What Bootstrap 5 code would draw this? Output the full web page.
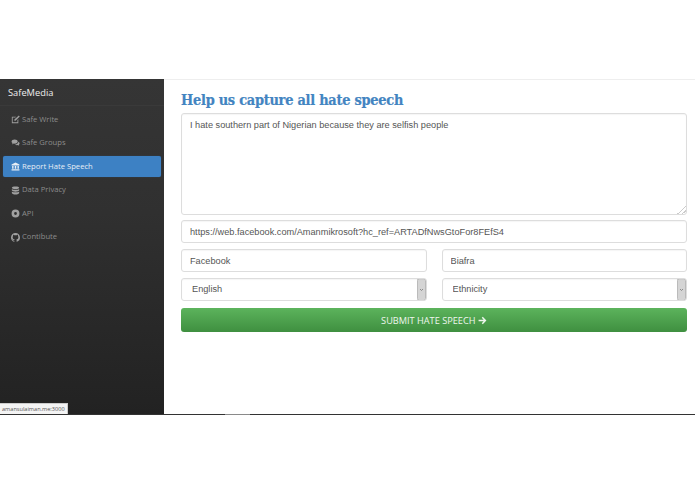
<!DOCTYPE html>
<html lang="en">
<head>
    <meta charset="UTF-8">
    <meta name="viewport" content="width=device-width, initial-scale=1.0">
    <title>SafeMedia</title>

    <link href="https://cdn.jsdelivr.net/npm/bootstrap@5.3.0/dist/css/bootstrap.min.css" rel="stylesheet">

    <style>
        body { background: #fff; font-family: "Open Sans", sans-serif; overflow: hidden; }
        .top-gap { height: 79px; }
        .shell { height: 336px; border-bottom: 1px solid; border-image: linear-gradient(90deg, #333 225px, #8a8a8a 225px, #8a8a8a 250px, #333 250px) 1; }
        .side { width: 164px; flex: none; background: linear-gradient(#353535, #303030 40%, #222); position: relative; }
        .brand { height: 27px; padding: 7px 0 0 8px; color: #eee; font-size: 9.3px; line-height: 14px; border-bottom: 1px solid #3a3a3a; }
        .side-list { padding-top: 3px; }
        .side-item { display: flex; align-items: center; gap: 2px; height: 20.5px; margin: 0 3px 3.1px; padding-left: 8px; color: #8c8c8c; font-size: 7.65px; border-radius: 2px; }
        .side-item svg { width: 9px; height: 9px; fill: #a0a0a0; flex: none; }
        .side-item.on { background: #3d81c4; color: #e8eef5; box-shadow: 0 0 1px #2a5d90; }
        .side-item.on svg { fill: #e8eef5; }
        .status-tip { position: absolute; left: 0; bottom: 0; background: #f4f4f4; color: #555; font-size: 5.6px; line-height: 10px; padding: 0 2px; border: 1px solid #ccc; border-left: 0; border-bottom: 0; }
        .main-area { border-top: 1px solid #eee; padding: 10px 8px 0 17px; }
        .page-head { font-family: "DejaVu Serif Condensed", "DejaVu Serif", serif; font-weight: 700; font-size: 14.4px; letter-spacing: -.25px; -webkit-text-stroke: .2px #4284c1; color: #4284c1; line-height: 20px; margin-bottom: 3px; }
        .field { font-family: "Liberation Sans", sans-serif; font-size: 9.2px; color: #555; border: 1px solid #ddd; border-radius: 3px; padding: 0 8px; height: 23px; min-height: 0; box-shadow: inset 0 1px 1px rgba(0,0,0,.04); }
        textarea.field { height: 102px; padding-top: 5px; margin-bottom: -1px; }
        textarea.field::-webkit-resizer { background: linear-gradient(135deg, transparent 70%, #ccc 70%, #ccc 76%, transparent 76%, transparent 84%, #ccc 84%, #ccc 90%, transparent 90%); }
        .stack { display: flex; flex-direction: column; gap: 6px; }
        .pair { display: flex; column-gap: 15px; }
        .drop { background-image: url("data:image/svg+xml,%3Csvg xmlns='http://www.w3.org/2000/svg' width='9' height='23'%3E%3Crect x='.5' y='.5' width='8' height='22' rx='2' fill='%23d5d5d5' stroke='%23bbb'/%3E%3Cpath d='M3 11l1.500 1.500L6 11' fill='none' stroke='%23777' stroke-width='.8'/%3E%3C/svg%3E"); background-position: right 0 center; background-size: 9px 23px; padding: 1px 0 0 10px; }
        .send-btn { height: 24px; margin-top: 1px; padding: 1px 0 0; border: 0; border-radius: 3px; color: #eef6ee; font-size: 9.2px; background: linear-gradient(#5cb35c, #3f8f40); }
        .send-btn:hover { color: #fff; }
        .send-btn svg { width: 9px; height: 9px; fill: currentColor; vertical-align: -1px; }
    </style>
</head>
<body>

    <div class="top-gap"></div>

    <div class="shell d-flex">
        <div class="side">
            <div class="brand">SafeMedia</div>
            <div class="side-list">
                <div class="side-item">
                    <svg viewBox="0 0 16 16"><path d="M2 3h7L7.500 4.500H3v8.500h8.500V9L13 7.500V14.500H1.500V3zM14 1l1.500 1.500L8 10H6V8z"/></svg>
                    Safe Write
                </div>
                <div class="side-item">
                    <svg viewBox="0 0 16 16"><path d="M6.500 2.500c3 0 5.500 1.600 5.500 3.700S9.500 10 6.500 10c-.6 0-1.200 0-1.700-.2L2 11.500l.7-2.400C1.600 8.400 1 7.300 1 6.200c0-2.100 2.500-3.700 5.500-3.700zM13 6.500c1.300.6 2.300 1.700 2.300 3 0 .9-.5 1.800-1.300 2.400l.5 2-2.300-1.300c-2 .4-4-.2-5-1.500 3.500 0 6-2 5.800-4.600z"/></svg>
                    Safe Groups
                </div>
                <div class="side-item on">
                    <svg viewBox="0 0 16 16"><path d="M8 1l7 3.500V6H1V4.500zM2 7h2.500v5H2zM6.700 7h2.600v5H6.700zM11.500 7H14v5h-2.500zM1 13h14v2H1z"/></svg>
                    Report Hate Speech
                </div>
                <div class="side-item">
                    <svg viewBox="0 0 16 16"><path d="M8 1c3.600 0 6.500 1 6.500 2.300S11.600 5.600 8 5.600 1.500 4.600 1.500 3.300 4.400 1 8 1zM1.500 5.300C3 6.400 5.500 6.900 8 6.900s5-.5 6.500-1.600v2.400C14.500 9 11.600 10 8 10S1.500 9 1.500 7.700zM1.500 9.700C3 10.800 5.500 11.300 8 11.300s5-.5 6.500-1.600v2.600C14.500 13.600 11.600 15 8 15s-6.500-1.400-6.500-2.700z"/></svg>
                    Data Privacy
                </div>
                <div class="side-item">
                    <svg viewBox="0 0 16 16"><path fill-rule="evenodd" d="M8 1a7 7 0 1 1 0 14A7 7 0 0 1 8 1zm0 4.500a2.500 2.500 0 1 0 0 5 2.500 2.500 0 0 0 0-5z"/></svg>
                    API
                </div>
                <div class="side-item">
                    <svg viewBox="0 0 16 16"><path d="M8 0C3.580 0 0 3.580 0 8c0 3.540 2.290 6.530 5.470 7.590.4.070.55-.17.550-.38 0-.19-.01-.82-.01-1.490-2.010.37-2.530-.49-2.690-.94-.09-.23-.48-.94-.82-1.130-.28-.15-.68-.52-.01-.53.63-.01 1.080.58 1.230.82.720 1.210 1.870.87 2.330.66.070-.52.280-.87.510-1.070-1.780-.2-3.640-.89-3.640-3.950 0-.87.310-1.590.820-2.150-.08-.2-.36-1.020.08-2.120 0 0 .67-.21 2.200.82.640-.18 1.320-.27 2-.27s1.360.09 2 .27c1.530-1.040 2.200-.82 2.200-.82.44 1.100.16 1.920.08 2.120.51.56.82 1.270.82 2.150 0 3.070-1.870 3.750-3.650 3.950.29.25.54.73.54 1.480 0 1.070-.01 1.930-.01 2.200 0 .21.15.46.55.38A8.010 8.010 0 0 0 16 8c0-4.420-3.580-8-8-8z"/></svg>
                    Contibute
                </div>
            </div>
            <div class="status-tip">amansulaiman.me:3000</div>
        </div>

        <div class="main-area flex-grow-1">
            <h1 class="page-head">Help us capture all hate speech</h1>
            <form class="stack">
                <textarea class="form-control field">I hate southern part of Nigerian because they are selfish people</textarea>
                <input type="text" class="form-control field" value="https://web.facebook.com/Amanmikrosoft?hc_ref=ARTADfNwsGtoFor8FEfS4">
                <div class="pair">
                    <input type="text" class="form-control field" value="Facebook">
                    <input type="text" class="form-control field" value="Biafra">
                </div>
                <div class="pair">
                    <select class="form-select field drop"><option>English</option></select>
                    <select class="form-select field drop"><option>Ethnicity</option></select>
                </div>
                <button type="button" class="btn send-btn w-100">SUBMIT HATE SPEECH <svg viewBox="0 0 16 16"><path d="M8.500 1.500L15 8l-6.500 6.500-1.800-1.800L10 9.300H1V6.700h9L6.700 3.300z"/></svg></button>
            </form>
        </div>
    </div>

    <script src="https://cdn.jsdelivr.net/npm/bootstrap@5.3.0/dist/js/bootstrap.bundle.min.js"></script>
</body>
</html>
